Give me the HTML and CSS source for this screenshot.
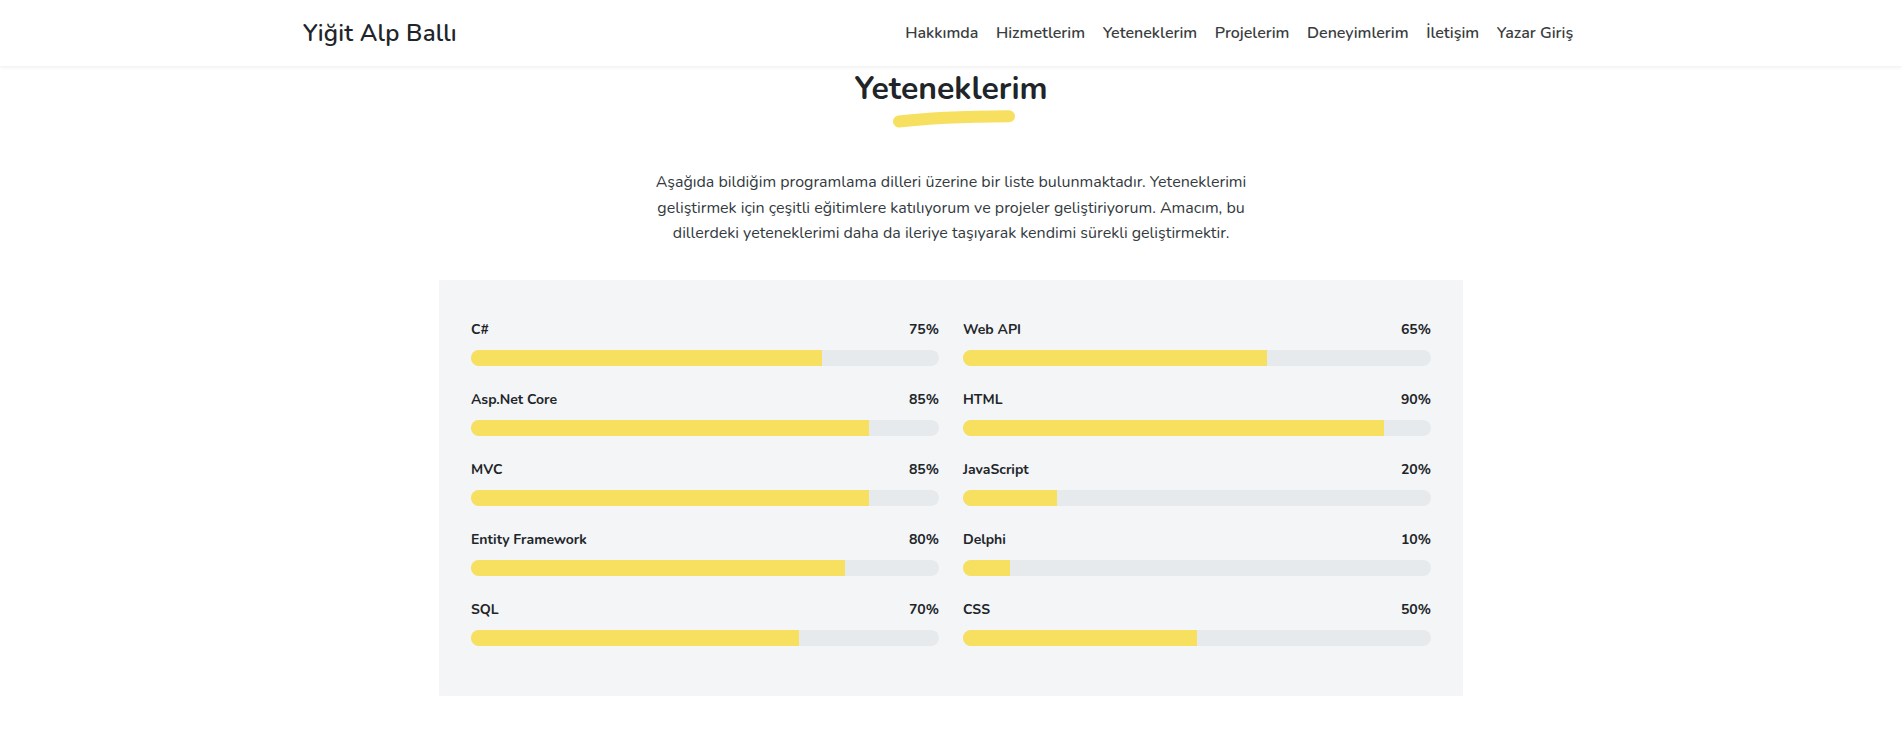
FILE: index.html
```html
<!DOCTYPE html>
<html lang="tr">
<head>
<meta charset="utf-8">
<title>Yiğit Alp Ballı</title>
<link rel="stylesheet" href="styles.css">
</head>
<body>
<header class="navbar">
  <div class="container nav-inner">
    <a class="brand" href="#">Yiğit Alp Ballı</a>
    <nav class="nav-links">
      <a href="#">Hakkımda</a>
      <a href="#">Hizmetlerim</a>
      <a href="#">Yeteneklerim</a>
      <a href="#">Projelerim</a>
      <a href="#">Deneyimlerim</a>
      <a href="#">İletişim</a>
      <a href="#">Yazar Giriş</a>
    </nav>
  </div>
</header>

<main class="skills-section">
  <h2 class="section-title">Yeteneklerim</h2>
  <svg class="title-underline" width="124" height="20" viewBox="0 0 124 20" aria-hidden="true">
    <path d="M7 12.5 C 35 9, 75 7.5, 117 7.2" fill="none" stroke="#f7df5f" stroke-width="12" stroke-linecap="round"/>
  </svg>
  <p class="section-text">Aşağıda bildiğim programlama dilleri üzerine bir liste bulunmaktadır. Yeteneklerimi geliştirmek için çeşitli eğitimlere katılıyorum ve projeler geliştiriyorum. Amacım, bu dillerdeki yeteneklerimi daha da ileriye taşıyarak kendimi sürekli geliştirmektir.</p>

  <div class="skills-box">
    <div class="skills-col">
      <div class="skill">
        <div class="skill-head"><span>C#</span><span>75%</span></div>
        <div class="track"><div class="fill" style="width:75%"></div></div>
      </div>
      <div class="skill">
        <div class="skill-head"><span>Asp.Net Core</span><span>85%</span></div>
        <div class="track"><div class="fill" style="width:85%"></div></div>
      </div>
      <div class="skill">
        <div class="skill-head"><span>MVC</span><span>85%</span></div>
        <div class="track"><div class="fill" style="width:85%"></div></div>
      </div>
      <div class="skill">
        <div class="skill-head"><span>Entity Framework</span><span>80%</span></div>
        <div class="track"><div class="fill" style="width:80%"></div></div>
      </div>
      <div class="skill">
        <div class="skill-head"><span>SQL</span><span>70%</span></div>
        <div class="track"><div class="fill" style="width:70%"></div></div>
      </div>
    </div>
    <div class="skills-col">
      <div class="skill">
        <div class="skill-head"><span>Web API</span><span>65%</span></div>
        <div class="track"><div class="fill" style="width:65%"></div></div>
      </div>
      <div class="skill">
        <div class="skill-head"><span>HTML</span><span>90%</span></div>
        <div class="track"><div class="fill" style="width:90%"></div></div>
      </div>
      <div class="skill">
        <div class="skill-head"><span>JavaScript</span><span>20%</span></div>
        <div class="track"><div class="fill" style="width:20%"></div></div>
      </div>
      <div class="skill">
        <div class="skill-head"><span>Delphi</span><span>10%</span></div>
        <div class="track"><div class="fill" style="width:10%"></div></div>
      </div>
      <div class="skill">
        <div class="skill-head"><span>CSS</span><span>50%</span></div>
        <div class="track"><div class="fill" style="width:50%"></div></div>
      </div>
    </div>
  </div>
</main>
</body>
</html>
```

FILE: styles.css
```css
* { box-sizing: border-box; }

html, body {
  margin: 0;
  padding: 0;
  background: #ffffff;
  color: #212529;
  font-family: "Nunito", "Lato", "Open Sans", sans-serif;
}

a { text-decoration: none; color: inherit; }

.navbar {
  height: 66px;
  background: #ffffff;
  box-shadow: 0 1px 4px rgba(0, 0, 0, 0.08);
  position: relative;
  z-index: 2;
}

.container {
  width: 1320px;
  margin: 0 auto;
  padding: 0 12px;
}

.nav-inner {
  height: 100%;
  display: flex;
  align-items: center;
  justify-content: space-between;
}

.brand {
  font-size: 24px;
  font-weight: 600;
  color: #212529;
  letter-spacing: 0.2px;
}

.nav-links {
  display: flex;
  align-items: center;
  margin-right: 17px;
}

.nav-links a {
  font-size: 16px;
  font-weight: 600;
  color: #3a3d40;
  padding: 0 8.8px;
}

.skills-section {
  display: flex;
  flex-direction: column;
  align-items: center;
  padding-bottom: 40px;
}

.section-title {
  margin: 4px 0 0;
  font-size: 32px;
  line-height: 38px;
  font-weight: 700;
  color: #212529;
}

.title-underline {
  display: block;
  margin-top: 1px;
  margin-left: 6px;
}

.section-text {
  width: 620px;
  margin: 41px 0 0;
  text-align: center;
  font-size: 16px;
  line-height: 25.5px;
  color: #333a40;
}

.skills-box {
  width: 1024px;
  margin-top: 33px;
  background: #f4f5f7;
  padding: 40px 32px 26px;
  display: grid;
  grid-template-columns: 1fr 1fr;
  column-gap: 24px;
}

.skills-col {
  display: flex;
  flex-direction: column;
}

.skill {
  margin-bottom: 24px;
}

.skill-head {
  display: flex;
  justify-content: space-between;
  font-size: 14px;
  line-height: 20px;
  font-weight: 700;
  color: #212529;
  margin-bottom: 10px;
}

.track {
  height: 16px;
  border-radius: 8px;
  background: #e7eaed;
  overflow: hidden;
}

.fill {
  height: 100%;
  background: #f7df5f;
}
```
